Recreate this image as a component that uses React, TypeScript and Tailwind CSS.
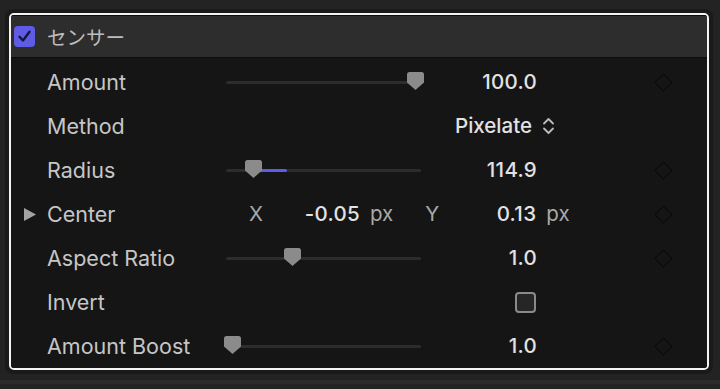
import type { ReactNode } from "react";

const LABEL = { fontFamily: "Inter, 'Liberation Sans', sans-serif" };
const JP = { fontFamily: "'Noto Sans CJK JP', 'Noto Sans', sans-serif" };

function Thumb() {
  return (
    <svg width="17" height="18" viewBox="0 0 17 18" aria-hidden>
      <path d="M2.5 0 H14.5 Q17 0 17 2.5 V10.5 L8.5 18 L0 10.5 V2.5 Q0 0 2.5 0Z" fill="#8b8b8b" />
    </svg>
  );
}

function Slider({ at, fillTo }: { at: number; fillTo?: number }) {
  return (
    <div className="relative h-[3px] w-[195px] rounded-full bg-[#2c2c2c]">
      {fillTo !== undefined && (
        <div
          className="absolute top-0 h-[3px] rounded-full bg-[#5e5ce6]"
          style={{ left: at, width: fillTo - at }}
        />
      )}
      <div className="absolute -top-[9px]" style={{ left: at - 8.5 }}>
        <Thumb />
      </div>
    </div>
  );
}

function Diamond() {
  return <div className="ml-[120px] h-[13px] w-[13px] rotate-45 rounded-[1px] border border-[#0a0a0a]" />;
}

function Row({ label, children, lead }: { label: string; children?: ReactNode; lead?: ReactNode }) {
  return (
    <div className="flex h-[44px] items-center">
      <div className="flex w-[36px] justify-center pl-[2px]">{lead}</div>
      <div className="w-[179px] text-[21.5px] text-[#c6c6c6]" style={LABEL}>
        {label}
      </div>
      {children}
    </div>
  );
}

function Value({ children, w = 116 }: { children: ReactNode; w?: number }) {
  return (
    <div
      className="text-right text-[20.5px] font-medium tracking-[0.3px] text-[#e2e2e2]"
      style={{ ...LABEL, width: w }}
    >
      {children}
    </div>
  );
}

function Unit({ children }: { children: ReactNode }) {
  return (
    <span className="ml-[10px] text-[20.5px] text-[#a9a9a9]" style={LABEL}>
      {children}
    </span>
  );
}

export default function App() {
  return (
    <div className="h-[389px] w-[720px] overflow-hidden bg-[#232323]">
      <div className="ml-[5px] mt-[9px] w-[708px] rounded-[8px] bg-[#1a1a1a] p-[4px]">
        <div className="overflow-hidden rounded-[5px] border-2 border-[#f4f4f4]">
          <div className="border-t border-[#0c0c0c] bg-[#2d2d2d]">
            <div className="flex h-[41px] items-center pl-[3px]">
              <div className="flex h-[21px] w-[21px] items-center justify-center rounded-[4px] bg-[#5e5ce6]">
                <svg width="15" height="15" viewBox="0 0 15 15" aria-hidden>
                  <path d="M2.5 7.8 L6 11.5 L12.5 2.8" fill="none" stroke="#15163a" strokeWidth="2.4" strokeLinecap="round" strokeLinejoin="round" />
                </svg>
              </div>
              <span className="ml-[12px] text-[19.5px] text-[#bdbdbd]" style={JP}>
                センサー
              </span>
            </div>
          </div>
          <div className="border-t border-[#0c0c0c] bg-[#151515] pt-[2px]">
            <Row label="Amount">
              <Slider at={189} />
              <Value>100.0</Value>
              <Diamond />
            </Row>
            <Row label="Method">
              <div className="flex w-[330px] items-center justify-end">
                <span className="text-[20.5px] font-medium text-[#e2e2e2]" style={LABEL}>
                  Pixelate
                </span>
                <svg className="ml-[9px]" width="15" height="20" viewBox="0 0 15 20" aria-hidden>
                  <path d="M3 7.5 L7.5 3 L12 7.5 M3 12.5 L7.5 17 L12 12.5" fill="none" stroke="#bcbcbc" strokeWidth="1.8" strokeLinecap="round" strokeLinejoin="round" />
                </svg>
              </div>
            </Row>
            <Row label="Radius">
              <Slider at={27} fillTo={61} />
              <Value>114.9</Value>
              <Diamond />
            </Row>
            <Row
              label="Center"
              lead={
                <svg width="14" height="15" viewBox="0 0 14 15" aria-hidden>
                  <path d="M1 1 L13 7.5 L1 14Z" fill="#a3a3a3" />
                </svg>
              }
            >
              <div className="flex w-[356px] items-center">
                <span className="ml-[23px] w-[13px] text-[20.5px] text-[#a9a9a9]" style={LABEL}>
                  X
                </span>
                <Value w={98}>-0.05</Value>
                <Unit>px</Unit>
                <span className="ml-[32px] w-[13px] text-[20.5px] text-[#a9a9a9]" style={LABEL}>
                  Y
                </span>
                <Value w={98}>0.13</Value>
                <Unit>px</Unit>
              </div>
              <div className="-ml-[45px]">
                <Diamond />
              </div>
            </Row>
            <Row label="Aspect Ratio">
              <Slider at={66} />
              <Value>1.0</Value>
              <Diamond />
            </Row>
            <Row label="Invert">
              <div className="flex w-[311px] justify-end">
                <div className="mr-[1px] h-[21px] w-[21px] rounded-[4px] border-2 border-[#8a8a8a] bg-[#262626]" />
              </div>
            </Row>
            <Row label="Amount Boost">
              <Slider at={6} />
              <Value>1.0</Value>
              <Diamond />
            </Row>
          </div>
        </div>
      </div>
      <div className="mt-[6px] h-[4px] w-full bg-[#2b2b2b]" />
    </div>
  );
}
